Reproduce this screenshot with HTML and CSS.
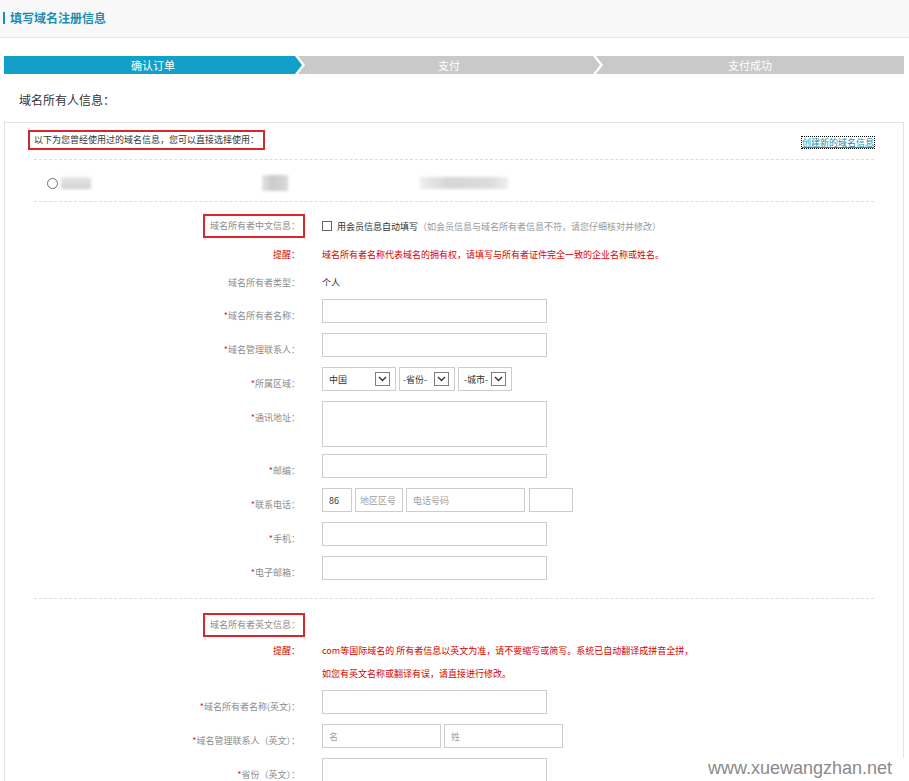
FILE: index.html
```html
<!DOCTYPE html>
<html lang="zh-CN">
<head>
    <meta charset="UTF-8">
    <title>填写域名注册信息</title>
    <link rel="stylesheet" href="styles.css">
</head>
<body>
    <div class="top-bar">
        <h1 class="page-title">填写域名注册信息</h1>
    </div>

    <div class="wrap">
        <div class="steps">
            <div class="step step-first active">确认订单</div>
            <div class="step step-mid">支付</div>
            <div class="step step-last">支付成功</div>
        </div>

        <h2 class="section-title">域名所有人信息：</h2>

        <div class="panel">
            <div class="used-head">
                <span class="mark">以下为您曾经使用过的域名信息，您可以直接选择使用：</span>
                <a class="new-link" href="#">创建新的域名信息</a>
            </div>
            <div class="dash"></div>
            <div class="used-item">
                <span class="radio"></span>
                <span class="blur blur-1"></span>
                <span class="blur blur-2"></span>
                <span class="blur blur-3"></span>
            </div>
            <div class="dash"></div>

            <div class="form">
                <div class="row text-row">
                    <div class="label"><span class="mark mark-label">域名所有者中文信息：</span></div>
                    <div class="value">
                        <span class="checkbox"></span>
                        <span class="auto">用会员信息自动填写</span><span class="hint">（如会员信息与域名所有者信息不符，请您仔细核对并修改）</span>
                    </div>
                </div>
                <div class="row text-row">
                    <div class="label warn">提醒：</div>
                    <div class="value warn">域名所有者名称代表域名的拥有权，请填写与所有者证件完全一致的企业名称或姓名。</div>
                </div>
                <div class="row text-row">
                    <div class="label">域名所有者类型：</div>
                    <div class="value">个人</div>
                </div>

                <div class="row field-row first-field">
                    <div class="label"><i class="req">*</i>域名所有者名称：</div>
                    <div class="value"><input class="input" type="text"></div>
                </div>
                <div class="row field-row">
                    <div class="label"><i class="req">*</i>域名管理联系人：</div>
                    <div class="value"><input class="input" type="text"></div>
                </div>
                <div class="row field-row">
                    <div class="label"><i class="req">*</i>所属区域：</div>
                    <div class="value selects">
                        <div class="select sel-country"><span>中国</span><span class="caret"><svg width="9" height="6" viewBox="0 0 9 6"><path d="M1 1l3.5 3.5L8 1" fill="none" stroke="#333" stroke-width="1.4"/></svg></span></div>
                        <div class="select sel-prov"><span>-省份-</span><span class="caret"><svg width="9" height="6" viewBox="0 0 9 6"><path d="M1 1l3.5 3.5L8 1" fill="none" stroke="#333" stroke-width="1.4"/></svg></span></div>
                        <div class="select sel-city"><span>-城市-</span><span class="caret"><svg width="9" height="6" viewBox="0 0 9 6"><path d="M1 1l3.5 3.5L8 1" fill="none" stroke="#333" stroke-width="1.4"/></svg></span></div>
                    </div>
                </div>
                <div class="row field-row area-row">
                    <div class="label"><i class="req">*</i>通讯地址：</div>
                    <div class="value"><textarea class="input textarea"></textarea></div>
                </div>
                <div class="row field-row">
                    <div class="label"><i class="req">*</i>邮编：</div>
                    <div class="value"><input class="input" type="text"></div>
                </div>
                <div class="row field-row">
                    <div class="label"><i class="req">*</i>联系电话：</div>
                    <div class="value phone">
                        <input class="input in-code" type="text" value="86">
                        <input class="input in-area" type="text" placeholder="地区区号">
                        <input class="input in-tel" type="text" placeholder="电话号码">
                        <input class="input in-ext" type="text">
                    </div>
                </div>
                <div class="row field-row">
                    <div class="label"><i class="req">*</i>手机：</div>
                    <div class="value"><input class="input" type="text"></div>
                </div>
                <div class="row field-row">
                    <div class="label"><i class="req">*</i>电子邮箱：</div>
                    <div class="value"><input class="input" type="text"></div>
                </div>
            </div>

            <div class="dash dash-mid"></div>

            <div class="form form-en">
                <div class="row text-row">
                    <div class="label"><span class="mark mark-label">域名所有者英文信息：</span></div>
                    <div class="value"></div>
                </div>
                <div class="row note-row">
                    <div class="label warn">提醒：</div>
                    <div class="value warn">com等国际域名的 所有者信息以英文为准，请不要缩写或简写。系统已自动翻译成拼音全拼，<br>如您有英文名称或翻译有误，请直接进行修改。</div>
                </div>
                <div class="row field-row first-field">
                    <div class="label"><i class="req">*</i>域名所有者名称(英文)：</div>
                    <div class="value"><input class="input" type="text"></div>
                </div>
                <div class="row field-row">
                    <div class="label"><i class="req">*</i>域名管理联系人（英文）：</div>
                    <div class="value names">
                        <input class="input in-name" type="text" placeholder="名">
                        <input class="input in-name" type="text" placeholder="姓">
                    </div>
                </div>
                <div class="row field-row">
                    <div class="label"><i class="req">*</i>省份（英文）：</div>
                    <div class="value"><input class="input" type="text"></div>
                </div>
            </div>
        </div>
    </div>

    <div class="watermark">www.xuewangzhan.net</div>
</body>
</html>
```

FILE: styles.css
```css
html, body {
    overflow: hidden;
}
body {
    margin: 0;
    font-family: "Noto Sans CJK SC", "Liberation Sans", sans-serif;
    font-size: 9px;
    color: #333;
    background: #fff;
}
.top-bar {
    height: 37px;
    background: #f8f8f8;
    border-bottom: 1px solid #e6e6e6;
}
.page-title {
    margin: 0;
    padding-left: 3px;
    line-height: 36px;
    font-size: 12px;
    font-weight: bold;
    color: #1b8db3;
}
.page-title::before {
    content: "";
    display: inline-block;
    width: 2px;
    height: 12px;
    margin-right: 5px;
    background: #1b8db3;
    vertical-align: -1px;
}
.wrap {
    width: 900px;
    margin-left: 4px;
}

/* steps */
.steps {
    display: flex;
    height: 18px;
    margin-top: 18px;
}
.step {
    line-height: 18px;
    text-align: center;
    font-size: 11px;
    color: #fff;
    background: #c9c9c9;
}
.step.active {
    background: #12a0c9;
}
.step-first {
    width: 298px;
    clip-path: polygon(0 0, calc(100% - 7px) 0, 100% 50%, calc(100% - 7px) 100%, 0 100%);
}
.step-mid {
    width: 302px;
    margin-left: -4px;
    clip-path: polygon(0 0, calc(100% - 7px) 0, 100% 50%, calc(100% - 7px) 100%, 0 100%, 7px 50%);
}
.step-last {
    flex: 1;
    margin-left: -4px;
    clip-path: polygon(0 0, 100% 0, 100% 100%, 0 100%, 7px 50%);
}

.section-title {
    margin: 16px 0 12px 15px;
    font-size: 12px;
    font-weight: normal;
    line-height: 20px;
    color: #333;
}

/* panel */
.panel {
    box-sizing: border-box;
    border: 1px solid #e3e3e3;
    padding: 0 29px 40px;
}
.used-head {
    display: flex;
    justify-content: space-between;
    align-items: center;
    margin-top: 7px;
}
.mark {
    border: 2px solid #d9262b;
    padding: 0 4px;
    line-height: 16px;
    margin-left: -6px;
}
.new-link {
    margin-top: 4px;
    line-height: 11px;
    color: #1a8fb0;
    text-decoration: underline;
    outline: 1px dotted #000;
}
.dash {
    margin-top: 9px;
    border-top: 1px dashed #dcdcdc;
}
.used-item {
    display: flex;
    align-items: center;
    height: 14px;
    padding: 16px 0 11px 13px;
}
.radio {
    box-sizing: border-box;
    width: 11px;
    height: 11px;
    border: 1px solid #6f6f6f;
    border-radius: 50%;
}
.blur {
    height: 12px;
    background: linear-gradient(#e8e8e8, #cfcfcf);
    filter: blur(1.5px);
}
.blur-1 {
    width: 30px;
    margin-left: 3px;
}
.blur-2 {
    width: 26px;
    height: 16px;
    margin-left: 171px;
    background: linear-gradient(90deg, #e4e4e4, #cacaca 40%, #d8d8d8);
}
.blur-3 {
    width: 88px;
    margin-left: 132px;
    background: linear-gradient(90deg, #efefef, #d6d6d6 30%, #dcdcdc 80%, #eeeeee);
}
.used-item + .dash {
    margin-top: 0;
}

/* form */
.form {
    padding-top: 10px;
}
.row {
    display: grid;
    grid-template-columns: 266px 1fr;
    column-gap: 22px;
}
.label {
    text-align: right;
    color: #8c8c8c;
    white-space: nowrap;
}
.text-row {
    height: 28px;
    align-items: center;
}
.mark-label {
    display: inline-block;
    margin: 0 -5px 0 0;
    padding: 2px 3px 2px 5px;
}
.value {
    display: flex;
    align-items: center;
}
.checkbox {
    box-sizing: border-box;
    width: 10px;
    height: 10px;
    margin-right: 5px;
    border: 1px solid #666;
}
.auto {
    color: #333;
}
.hint {
    color: #999;
}
.warn {
    color: #d40000;
}
.req {
    font-style: normal;
    color: #d22;
}
.field-row {
    align-items: start;
    margin-bottom: 10px;
}
.field-row .label {
    padding-top: 11px;
    line-height: 12px;
}
.first-field {
    margin-top: 3px;
}
.area-row {
    margin-bottom: 7px;
}
.input {
    box-sizing: border-box;
    width: 225px;
    height: 24px;
    margin: 0;
    padding: 0 6px;
    border: 1px solid #cdcdcd;
    font-family: "Noto Sans CJK SC", "Liberation Sans", sans-serif;
    font-size: 9px;
    color: #333;
    outline: none;
}
.input::placeholder {
    color: #a0a0a0;
}
.textarea {
    height: 46px;
    resize: none;
    display: block;
}
.selects {
    gap: 3px;
}
.select {
    box-sizing: border-box;
    display: flex;
    align-items: center;
    justify-content: space-between;
    height: 24px;
    padding: 0 5px 0 6px;
    border: 1px solid #cdcdcd;
    color: #333;
}
.sel-country {
    width: 74px;
}
.sel-prov {
    width: 56px;
    padding-left: 3px;
}
.sel-city {
    width: 54px;
    padding-left: 5px;
}
.caret {
    box-sizing: border-box;
    display: flex;
    align-items: center;
    justify-content: center;
    width: 15px;
    height: 14px;
    border: 1px solid #7f7f7f;
    background: #fff;
}
.phone {
    gap: 3px;
}
.in-code {
    width: 30px;
}
.in-area {
    width: 48px;
    padding: 0 4px;
}
.in-tel {
    width: 119px;
}
.in-ext {
    width: 44px;
    margin-left: 1px;
}
.names {
    gap: 3px;
}
.in-name {
    width: 119px;
}
.dash-mid {
    margin-top: 18px;
}
.form-en {
    padding-top: 12px;
}
.note-row {
    align-items: start;
    line-height: 23px;
}
.note-row .value {
    display: block;
}
.form-en .first-field {
    margin-top: 5px;
}

.watermark {
    position: absolute;
    left: 704px;
    right: 0;
    top: 758px;
    bottom: 0;
    padding-left: 4px;
    background: #fff;
    font-family: "Liberation Sans", Arial, sans-serif;
    font-size: 18px;
    line-height: 20px;
    color: #8a8a8a;
}
```
